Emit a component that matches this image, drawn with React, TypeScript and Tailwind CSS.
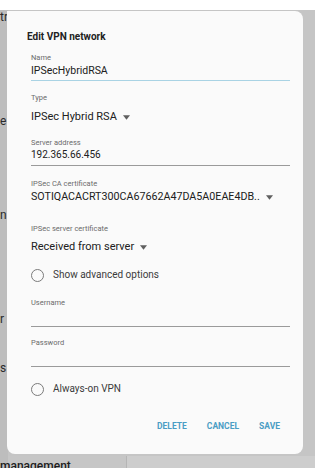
import React from "react";

const font = { fontFamily: "Roboto, 'Noto Sans', sans-serif" };

function Caret() {
  return (
    <svg width="7" height="5" viewBox="0 0 7 5" className="ml-[6px] shrink-0">
      <path d="M0 0.3 L7 0.3 L3.5 4.8 Z" fill="#5f5f5f" />
    </svg>
  );
}

function Radio({ label }: { label: string }) {
  return (
    <div className="flex items-center h-[14px]">
      <div className="w-[13px] h-[13px] rounded-full border-[1.3px] border-[#7a7a7a]" />
      <span className="ml-[9px] text-[10px] leading-[14px] text-[#3a3a3a]">{label}</span>
    </div>
  );
}

export default function App() {
  return (
    <div className="relative w-[315px] h-[468px] overflow-hidden bg-[#c5c5c5]" style={font}>
      {/* background page */}
      <div className="h-[10px] bg-white" />
      <div className="flex h-[458px]">
        <div className="w-[8px] bg-[#bdbdbd] overflow-hidden flex flex-col text-[#2a2a2a] text-[12px] leading-[14px]">
          <span className="mt-[0px]">tr</span>
          <span className="mt-[90px]">e</span>
          <span className="mt-[80px]">n</span>
          <span className="mt-[90px]">r</span>
          <span className="mt-[35px]">s</span>
          <span className="mt-[100px]">b</span>
        </div>
        <div className="flex-1 flex flex-col justify-end">
          <div className="h-[12px] flex">
            <div className="w-[119px] bg-[#c6c6c6] border-r border-[#b5b5b5]" />
            <div className="flex-1 bg-[#cdcdcd]" />
          </div>
        </div>
      </div>
      <div className="absolute left-0 bottom-[-5px] text-[12px] font-medium text-[#1e1e1e] leading-[14px]">management</div>

      {/* dialog */}
      <div className="absolute left-[7px] top-[11px] w-[296px] h-[443px] bg-[#fafafa] rounded-[8px] rounded-tl-none pt-[19px] pl-[20px] pr-[13px] flex flex-col">
        <div className="text-[10px] leading-[14px] font-bold text-[#222]">Edit VPN network</div>
        <div className="pl-[4px] flex flex-col">
          <div className="mt-[9px] text-[7.5px] leading-[10px] text-[#6b6b6b]">Name</div>
          <div className="mt-[1px] text-[10.5px] leading-[14px] text-[#202020]">IPSecHybridRSA</div>
          <div className="mt-[2px] h-[1px] bg-[#a9d3e4]" />

          <div className="mt-[12px] text-[7.5px] leading-[10px] text-[#6b6b6b]">Type</div>
          <div className="mt-[6px] flex items-center text-[11px] leading-[16px] text-[#202020]">
            IPSec Hybrid RSA <Caret />
          </div>

          <div className="mt-[13px] text-[7.5px] leading-[10px] text-[#6b6b6b]">Server address</div>
          <div className="text-[10px] leading-[14px] text-[#202020]">192.365.66.456</div>
          <div className="mt-[3px] h-[1px] bg-[#9a9a9a]" />

          <div className="mt-[13px] text-[7.5px] leading-[10px] text-[#6b6b6b]">IPSec CA certificate</div>
          <div className="flex items-center text-[10.7px] leading-[16px] text-[#202020]">
            SOTIQACACRT300CA67662A47DA5A0EAE4DB.. <Caret />
          </div>

          <div className="mt-[19px] text-[7.5px] leading-[10px] text-[#6b6b6b]">IPSec server certificate</div>
          <div className="mt-[5px] flex items-center text-[11px] leading-[16px] text-[#202020]">
            Received from server <Caret />
          </div>

          <div className="mt-[13px]">
            <Radio label="Show advanced options" />
          </div>

          <div className="mt-[16px] text-[7.5px] leading-[10px] text-[#6b6b6b]">Username</div>
          <div className="mt-[18px] h-[1px] bg-[#9a9a9a]" />

          <div className="mt-[11px] text-[7.5px] leading-[10px] text-[#6b6b6b]">Password</div>
          <div className="mt-[18px] h-[1px] bg-[#9a9a9a]" />

          <div className="mt-[15px]">
            <Radio label="Always-on VPN" />
          </div>
        </div>

        <div className="mt-[24px] flex justify-end gap-[20px] pr-[10px] text-[8.5px] leading-[12px] font-bold text-[#4a9dc4]">
          <span>DELETE</span>
          <span>CANCEL</span>
          <span>SAVE</span>
        </div>
      </div>
    </div>
  );
}
